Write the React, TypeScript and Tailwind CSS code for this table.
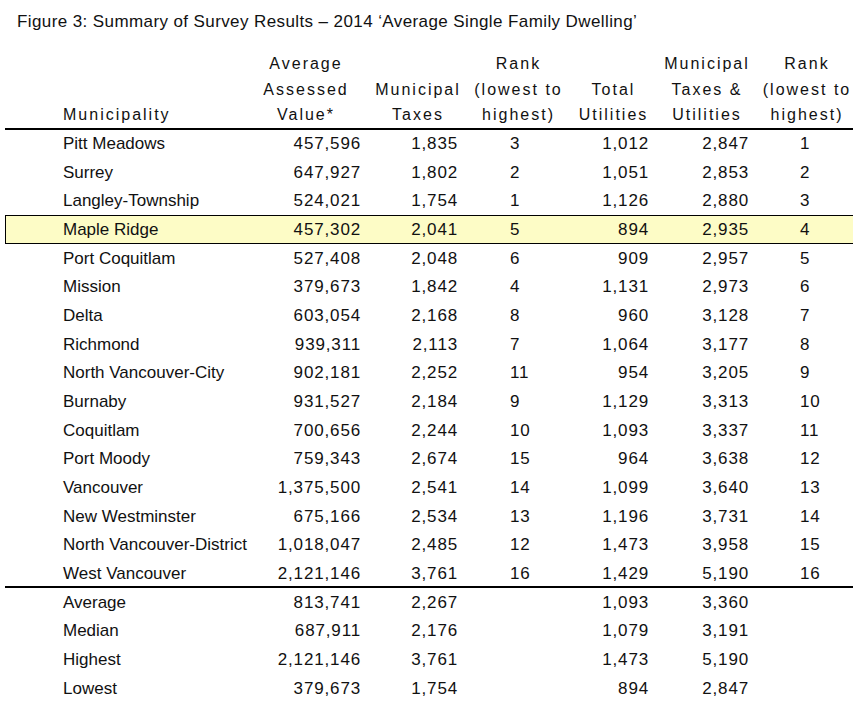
const rows: Array<[string, string, string, string, string, string, string]> = [
  ["Pitt Meadows", "457,596", "1,835", "3", "1,012", "2,847", "1"],
  ["Surrey", "647,927", "1,802", "2", "1,051", "2,853", "2"],
  ["Langley-Township", "524,021", "1,754", "1", "1,126", "2,880", "3"],
  ["Maple Ridge", "457,302", "2,041", "5", "894", "2,935", "4"],
  ["Port Coquitlam", "527,408", "2,048", "6", "909", "2,957", "5"],
  ["Mission", "379,673", "1,842", "4", "1,131", "2,973", "6"],
  ["Delta", "603,054", "2,168", "8", "960", "3,128", "7"],
  ["Richmond", "939,311", "2,113", "7", "1,064", "3,177", "8"],
  ["North Vancouver-City", "902,181", "2,252", "11", "954", "3,205", "9"],
  ["Burnaby", "931,527", "2,184", "9", "1,129", "3,313", "10"],
  ["Coquitlam", "700,656", "2,244", "10", "1,093", "3,337", "11"],
  ["Port Moody", "759,343", "2,674", "15", "964", "3,638", "12"],
  ["Vancouver", "1,375,500", "2,541", "14", "1,099", "3,640", "13"],
  ["New Westminster", "675,166", "2,534", "13", "1,196", "3,731", "14"],
  ["North Vancouver-District", "1,018,047", "2,485", "12", "1,473", "3,958", "15"],
  ["West Vancouver", "2,121,146", "3,761", "16", "1,429", "5,190", "16"],
];

const summary: Array<[string, string, string, string, string]> = [
  ["Average", "813,741", "2,267", "1,093", "3,360"],
  ["Median", "687,911", "2,176", "1,079", "3,191"],
  ["Highest", "2,121,146", "3,761", "1,473", "5,190"],
  ["Lowest", "379,673", "1,754", "894", "2,847"],
];

const grid = "grid grid-cols-[250px_111px_100px_105px_85px_102px_95px]";
const num = "tracking-[0.05em]";

function Row({
  cells,
  highlight,
}: {
  cells: string[];
  highlight?: boolean;
}) {
  return (
    <div
      className={`${grid} h-[28.67px] items-center ${
        highlight
          ? "bg-[#fdfcc6] shadow-[inset_1px_1px_0_#000,inset_0_-1px_0_#000]"
          : ""
      }`}
    >
      <div className="pl-[58px] whitespace-nowrap">{cells[0]}</div>
      <div className={`text-right pr-[5px] ${num}`}>{cells[1]}</div>
      <div className={`text-right pr-[8px] ${num}`}>{cells[2]}</div>
      <div className={`pl-[44px] ${num}`}>{cells[3]}</div>
      <div className={`text-right pr-[7px] ${num}`}>{cells[4]}</div>
      <div className={`text-right pr-[9px] ${num}`}>{cells[5]}</div>
      <div className={`pl-[42px] ${num}`}>{cells[6]}</div>
    </div>
  );
}

export default function App() {
  return (
    <div
      className="w-[853px] h-[711px] overflow-hidden bg-white text-[#111]"
      style={{ fontFamily: '"Liberation Sans", Arial, sans-serif' }}
    >
      <div className="pt-[12px] pl-[17px] text-[17px] leading-[20px] tracking-[0.4px] whitespace-nowrap">
        Figure 3: Summary of Survey Results – 2014 ‘Average Single Family Dwelling’
      </div>

      <div className="ml-[5px] mt-[18px] w-[850px] text-[17px]">
        {/* header */}
        <div
          className={`${grid} items-end text-[16px] leading-[25.5px] tracking-[2px] pt-[1px] border-b-2 border-black`}
        >
          <div className="pl-[58px]">Municipality</div>
          <div className="text-center pr-[9px]">
            Average
            <br />
            Assessed
            <br />
            Value*
          </div>
          <div className="text-center pl-[4px]">
            Municipal
            <br />
            Taxes
          </div>
          <div className="text-center">
            Rank
            <br />
            (lowest to
            <br />
            highest)
          </div>
          <div className="text-center">
            Total
            <br />
            Utilities
          </div>
          <div className="text-center">
            Municipal
            <br />
            Taxes &amp;
            <br />
            Utilities
          </div>
          <div className="text-center pl-[3px]">
            Rank
            <br />
            (lowest to
            <br />
            highest)
          </div>
        </div>

        {/* municipalities */}
        <div className="shadow-[inset_0_-2px_0_#000]">
          {rows.map((r) => (
            <Row key={r[0]} cells={r} highlight={r[0] === "Maple Ridge"} />
          ))}
        </div>

        {/* summary */}
        <div>
          {summary.map((s) => (
            <Row key={s[0]} cells={[s[0], s[1], s[2], "", s[3], s[4], ""]} />
          ))}
        </div>
      </div>
    </div>
  );
}
